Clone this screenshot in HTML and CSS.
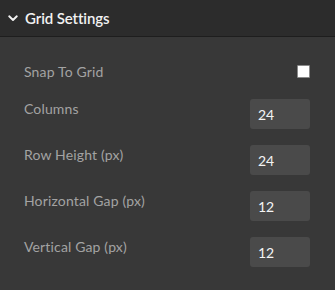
FILE: index.html
```html
<!DOCTYPE html>
<html>
<head>
<meta charset="utf-8">
<link rel="stylesheet" href="styles.css">
</head>
<body>
<div class="panel">
  <div class="header">
    <svg class="chev" width="10" height="7" viewBox="0 0 10 7"><path d="M1.2 1.3 L5 5 L8.8 1.3" fill="none" stroke="#f2f2f2" stroke-width="1.9" stroke-linecap="round" stroke-linejoin="round"/></svg>
    <span class="title">Grid Settings</span>
  </div>
  <div class="body">
    <div class="row snap">
      <span class="label">Snap To Grid</span>
      <input class="check" type="checkbox">
    </div>
    <div class="row">
      <span class="label">Columns</span>
      <input class="num" type="text" value="24">
    </div>
    <div class="row">
      <span class="label">Row Height (px)</span>
      <input class="num" type="text" value="24">
    </div>
    <div class="row">
      <span class="label">Horizontal Gap (px)</span>
      <input class="num" type="text" value="12">
    </div>
    <div class="row">
      <span class="label">Vertical Gap (px)</span>
      <input class="num" type="text" value="12">
    </div>
  </div>
</div>
</body>
</html>
```
FILE: styles.css
```css
html, body {
  margin: 0;
  padding: 0;
  background: #383838;
  font-family: Lato, "Open Sans", sans-serif;
}
.panel {
  width: 335px;
  height: 290px;
  background: #383838;
  overflow: hidden;
}
.header {
  height: 36px;
  background: #2c2c2c;
  border-bottom: 1px solid #1e1e1e;
  display: flex;
  align-items: center;
  padding-left: 8px;
  box-sizing: content-box;
}
.chev {
  margin-right: 7px;
  margin-top: 1px;
}
.title {
  color: #f2f2f2;
  font-size: 15px;
  font-weight: 600;
  letter-spacing: -0.1px;
}
.body {
  padding: 25px 25px 0 24px;
  display: flex;
  flex-direction: column;
  gap: 16px;
}
.row {
  display: flex;
  justify-content: space-between;
  align-items: flex-start;
  min-height: 30px;
}
.row.snap {
  min-height: 21px;
}
.label {
  color: #a3a3a3;
  font-size: 14px;
  line-height: 20px;
  letter-spacing: 0.15px;
}
.check {
  appearance: none;
  -webkit-appearance: none;
  margin: 3px 0 0 0;
  width: 13px;
  height: 13px;
  background: #ffffff;
  border: 1px solid #8a8a8a;
  border-radius: 1px;
  box-sizing: border-box;
}
.num {
  width: 60px;
  height: 30px;
  box-sizing: border-box;
  background: #4a4a4a;
  border: none;
  border-radius: 3px;
  color: #f4f4f4;
  font-family: Lato, "Open Sans", sans-serif;
  font-size: 14px;
  padding: 0 8px;
  margin: 0;
  outline: none;
}
```
